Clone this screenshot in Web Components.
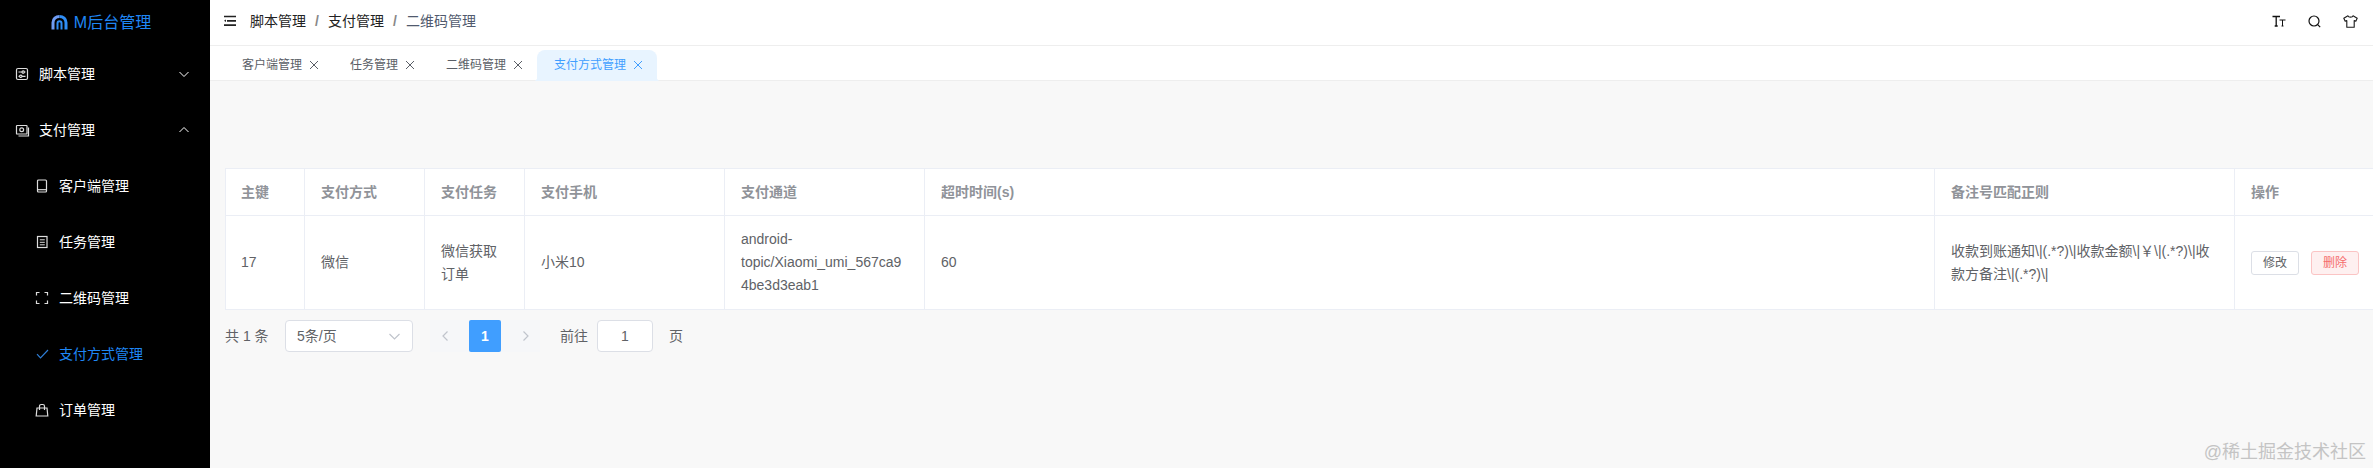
<!DOCTYPE html>
<html lang="zh-CN">
<head>
<meta charset="utf-8">
<title>支付方式管理</title>
<style>
html,body{margin:0;height:100%;overflow:hidden;background:#f8f8f8}
body{font:14px/1.5 "Liberation Sans","Noto Sans CJK SC",sans-serif;color:#606266}
</style>
</head>
<body>
<app-shell>
  <side-menu slot="side">
    <logo-mark slot="logo">M后台管理</logo-mark>
    <menu-item icon="script" arrow="down">脚本管理</menu-item>
    <menu-item icon="pay" arrow="up">支付管理</menu-item>
    <menu-item icon="phone" sub>客户端管理</menu-item>
    <menu-item icon="task" sub>任务管理</menu-item>
    <menu-item icon="scan" sub>二维码管理</menu-item>
    <menu-item icon="check" sub active>支付方式管理</menu-item>
    <menu-item icon="bag" sub>订单管理</menu-item>
  </side-menu>
  <top-bar slot="top">
    <bread-item>脚本管理</bread-item>
    <bread-item>支付管理</bread-item>
    <bread-item last>二维码管理</bread-item>
  </top-bar>
  <tab-bar slot="tabs">
    <tab-item>客户端管理</tab-item>
    <tab-item>任务管理</tab-item>
    <tab-item>二维码管理</tab-item>
    <tab-item active>支付方式管理</tab-item>
  </tab-bar>
  <data-table slot="main"></data-table>
  <page-bar slot="main"></page-bar>
  <water-mark slot="mark">@稀土掘金技术社区</water-mark>
</app-shell>
<script>
const FONT='"Liberation Sans","Noto Sans CJK SC",sans-serif';
function mount(el,html){el.attachShadow({mode:'open'}).innerHTML=html;}

const ICONS={
 script:'<rect x="1.500" y="1.500" width="11" height="11" rx="1.500"/><path d="M3.500 5h3.500M9.500 5h1M3.500 9.300h1M7 9.300h3.500"/><circle cx="8.200" cy="5" r="1.200"/><circle cx="5.800" cy="9.300" r="1.200"/>',
 pay:'<rect x="1.500" y="2.500" width="10.500" height="8.500" rx=".6"/><circle cx="6.700" cy="6.700" r="1.900"/><path d="M13.500 4.500V13H3.500"/>',
 phone:'<rect x="2.500" y="1" width="9" height="12" rx="1"/><path d="M2.500 10.700h9"/>',
 task:'<rect x="2.500" y="1.500" width="9.500" height="11"/><path d="M4.800 4.800h5M4.800 7.300h5M4.800 9.800h5" stroke-width="1"/>',
 scan:'<path d="M1.500 4.500v-3h3M9.500 1.500h3v3M12.500 9.500v3h-3M4.500 12.500h-3v-3"/>',
 check:'<path d="M2 7.200l3.500 3.600L13 3"/>',
 bag:'<path d="M2 5h10l.8 8H1.200z"/><path d="M4.500 7V3.200c0-1 .7-1.700 1.700-1.700h1.600c1 0 1.700.7 1.700 1.700V7"/>'
};

customElements.define('app-shell',class extends HTMLElement{constructor(){super();mount(this,`<style>
:host{display:flex;width:100%;height:100vh;position:relative;overflow:hidden}
.side{flex:0 0 210px;display:flex}
.col{flex:1;min-width:0;display:flex;flex-direction:column}
main{flex:1;padding:87px 0 0 15px;overflow:hidden;background:#f8f8f8}
</style>
<div class="side"><slot name="side"></slot></div>
<div class="col"><slot name="top"></slot><slot name="tabs"></slot><main><slot name="main"></slot></main></div>
<slot name="mark"></slot>`);}});

customElements.define('side-menu',class extends HTMLElement{constructor(){super();mount(this,`<style>
:host{display:block;flex:1;background:#000;color:#fff}
</style><slot name="logo"></slot><slot></slot>`);}});

customElements.define('logo-mark',class extends HTMLElement{constructor(){super();mount(this,`<style>
:host{display:flex;align-items:center;justify-content:center;gap:6px;height:46px;color:#1f87f5;font:16px/1 ${FONT};padding:0 8px 1px 0;box-sizing:border-box}
svg{width:17px;height:15px;flex:none}
span{display:block}
</style>
<svg viewBox="0 0 17 15" fill="none"><path d="M2 14.500V7.500C2 3.900 4.800 1.500 8.500 1.500" stroke="#6f9cf3" stroke-width="3"/><path d="M15 14.500V7.500C15 3.900 12.200 1.500 8.500 1.500" stroke="#2f8df5" stroke-width="3"/><path d="M6.500 14.500V8.300C6.500 7 7.300 6.200 8.500 6.200C9.700 6.200 10.500 7 10.500 8.300V14.500" stroke="#2f8df5" stroke-width="2"/></svg>
<span><slot></slot></span>`);}});

customElements.define('menu-item',class extends HTMLElement{constructor(){super();
 const sub=this.hasAttribute('sub'),active=this.hasAttribute('active');
 const arrow=this.getAttribute('arrow');
 const a=arrow?`<svg class="arr" viewBox="0 0 10 10" fill="none" stroke="currentColor" stroke-width="1"><path d="${arrow==='down'?'M.5 3l4.500 4.500L9.500 3':'M.5 7l4.500-4.500L9.500 7'}"/></svg>`:'';
 mount(this,`<style>
:host{display:flex;align-items:center;height:56px;padding-left:${sub?35:15}px;padding-right:21px;box-sizing:border-box;color:${active?'#1f87f5':'#fff'};font:14px/1 ${FONT}}
.ic{width:14px;height:14px;flex:none;margin-right:10px;overflow:visible;color:${active?'#2f7fd8':'#ddd'}}
.t{flex:1}
.arr{width:10px;height:10px;flex:none}
</style>
<svg class="ic" viewBox="0 0 14 14" fill="none" stroke="currentColor" stroke-width="1.200">${ICONS[this.getAttribute('icon')]}</svg>
<span class="t"><slot></slot></span>${a}`);}});

customElements.define('top-bar',class extends HTMLElement{constructor(){super();mount(this,`<style>
:host{display:flex;align-items:center;height:46px;box-sizing:border-box;border-bottom:1px solid #eee;background:#fff;padding:0 15px 3px 14px;font:14px/1 ${FONT}}
.ham{width:12px;height:12px;margin-right:14px;flex:none}
.crumbs{flex:1;display:flex;align-items:center}
.tools{display:flex;align-items:center;gap:22px}
.tools svg{display:block;flex:none}
</style>
<svg class="ham" viewBox="0 0 12 12" fill="none" stroke="#222" stroke-width="1.700"><path d="M0 1.500h12M3 5.800h9M0 10.200h12"/><path d="M2 4.600v2.400L0 5.800z" fill="#222" stroke="none"/></svg>
<div class="crumbs"><slot></slot></div>
<div class="tools">
<svg width="14" height="12" viewBox="0 0 14 12" fill="none" stroke="#111" stroke-width="1.300"><path d="M.5 1.500h7.500M4.200 1.500V11M2.700 11h3"/><path d="M7.500 5h6M10.500 5v6M9.500 11h2" stroke-width="1"/></svg>
<svg width="13" height="13" viewBox="0 0 13 13" fill="none" stroke="#111" stroke-width="1.200"><circle cx="6" cy="6" r="5"/><path d="M9.700 9.700l2.500 2.500"/></svg>
<svg width="15" height="13" viewBox="0 0 15 13" fill="none" stroke="#1a1a1a" stroke-width="1.100" stroke-linejoin="round"><path d="M5 .8L.8 3.200l1.400 3 1.600-.6v6.600h7.400V5.600l1.600.6 1.400-3L10 .8c-.5 1.800-4.500 1.800-5 0z"/></svg>
</div>`);}});

customElements.define('bread-item',class extends HTMLElement{constructor(){super();const last=this.hasAttribute('last');mount(this,`<style>
:host{display:inline-flex;align-items:center;color:${last?'#515a6e':'#222'}}
i{font-style:normal;width:22px;text-align:center;font-weight:700;color:#888}
</style><slot></slot>${last?'':'<i>/</i>'}`);}});

customElements.define('tab-bar',class extends HTMLElement{constructor(){super();mount(this,`<style>
:host{display:flex;align-items:flex-end;height:35px;box-sizing:border-box;padding:4px 0 0 15px;background:#fff;border-bottom:1px solid #eee}
</style><slot></slot>`);}});

customElements.define('tab-item',class extends HTMLElement{constructor(){super();const a=this.hasAttribute('active');const c=a?'#409eff':'#5a5e66';mount(this,`<style>
:host{display:flex;align-items:center;height:31px;margin-bottom:-1px;box-sizing:border-box;padding:0 14px 1px 17px;font:12px/1 ${FONT};color:${c};position:relative;${a?'background:#e8f4ff;border-radius:8px 8px 0 0;':''}}
svg{width:10px;height:10px;margin-left:7px;flex:none}
${a?`:host::before,:host::after{content:"";position:absolute;bottom:0;width:4px;height:4px}
:host::before{left:-4px;background:radial-gradient(circle at 0 0,transparent 4px,#e8f4ff 4.500px)}
:host::after{right:-4px;background:radial-gradient(circle at 100% 0,transparent 4px,#e8f4ff 4.500px)}`:''}
</style><span><slot></slot></span><svg viewBox="0 0 10 10" fill="none" stroke="${c}" stroke-width="1"><path d="M1 1l8 8M9 1l-8 8"/></svg>`);}});

customElements.define('data-table',class extends HTMLElement{constructor(){super();
 const widths=[79,120,100,200,200,1010,300,150];
 const heads=['主键','支付方式','支付任务','支付手机','支付通道','超时时间(s)','备注号匹配正则','操作'];
 const row=['17','微信','微信获取订单','小米10','android-<br>topic/Xiaomi_umi_567ca94be3d3eab1','60','收款到账通知\\|(.*?)\\|收款金额\\|￥\\|(.*?)\\|收款方备注\\|(.*?)\\|'];
 mount(this,`<style>
:host{display:block;width:2160px}
table{border-collapse:separate;border-spacing:0;table-layout:fixed;width:2160px;background:#fff;border-top:1px solid #ebeef5;border-left:1px solid #ebeef5;font:14px/23px ${FONT};color:#606266}
th,td{padding:12px 16px;border-right:1px solid #ebeef5;border-bottom:1px solid #ebeef5;text-align:left;overflow-wrap:anywhere;box-sizing:border-box}
th:first-child,td:first-child{padding-left:15px}
th{color:#909399;font-weight:700;padding-bottom:11px}
.ops{white-space:nowrap;display:flex;gap:12px}
</style>
<table><colgroup>${widths.map(w=>`<col style="width:${w}px">`).join('')}</colgroup>
<thead><tr>${heads.map(h=>`<th>${h}</th>`).join('')}</tr></thead>
<tbody><tr>${row.map(c=>`<td>${c}</td>`).join('')}<td><div class="ops"><mini-btn>修改</mini-btn><mini-btn danger>删除</mini-btn></div></td></tr></tbody></table>`);}});

customElements.define('mini-btn',class extends HTMLElement{constructor(){super();const d=this.hasAttribute('danger');mount(this,`<style>
:host{display:inline-flex;align-items:center;justify-content:center;width:48px;height:24px;box-sizing:border-box;border:1px solid ${d?'#fbc4c4':'#dcdfe6'};border-radius:3px;background:${d?'#fef0f0':'#fff'};color:${d?'#f56c6c':'#606266'};font:12px/1 ${FONT}}
</style><slot></slot>`);}});

customElements.define('page-bar',class extends HTMLElement{constructor(){super();mount(this,`<style>
:host{display:flex;align-items:center;height:32px;margin-top:10px;font:14px/1 ${FONT};color:#606266}
.total{width:60px}
.sel{width:128px;height:32px;box-sizing:border-box;border:1px solid #dcdfe6;border-radius:4px;background:#fff;display:flex;align-items:center;justify-content:space-between;padding:0 12px 0 11px;margin-right:17px;color:#606266}
.sel svg{width:11px;height:7px}
.nav{width:39px;height:32px;background:#f6f7f9;display:flex;align-items:center;justify-content:center;box-sizing:border-box}
.nav.p{padding-right:10px}
.nav.n{padding-left:10px}
.nav svg{width:6px;height:10px}
.cur{width:32px;height:32px;background:#409eff;color:#fff;font-weight:700;display:flex;align-items:center;justify-content:center;border-radius:2px}
.go{margin-left:20px;margin-right:9px}
.inp{width:56px;height:32px;box-sizing:border-box;border:1px solid #dcdfe6;border-radius:4px;background:#fff;display:flex;align-items:center;justify-content:center;margin-right:16px}
</style>
<span class="total">共 1 条</span>
<div class="sel"><span>5条/页</span><svg viewBox="0 0 11 7" fill="none" stroke="#c0c4cc" stroke-width="1.200"><path d="M.5 1l5 5 5-5"/></svg></div>
<div class="nav p"><svg viewBox="0 0 6 10" fill="none" stroke="#c0c4cc" stroke-width="1.200"><path d="M5.500.5L1 5l4.500 4.500"/></svg></div>
<div class="cur">1</div>
<div class="nav n"><svg viewBox="0 0 6 10" fill="none" stroke="#c0c4cc" stroke-width="1.200"><path d="M.5.5L5 5 .5 9.500"/></svg></div>
<span class="go">前往</span><div class="inp">1</div><span>页</span>`);}});

customElements.define('water-mark',class extends HTMLElement{constructor(){super();mount(this,`<style>
:host{position:absolute;right:7px;bottom:7px;font:18px/1 ${FONT};color:#c4c4c4;white-space:nowrap}
</style><slot></slot>`);}});
</script>
</body>
</html>
